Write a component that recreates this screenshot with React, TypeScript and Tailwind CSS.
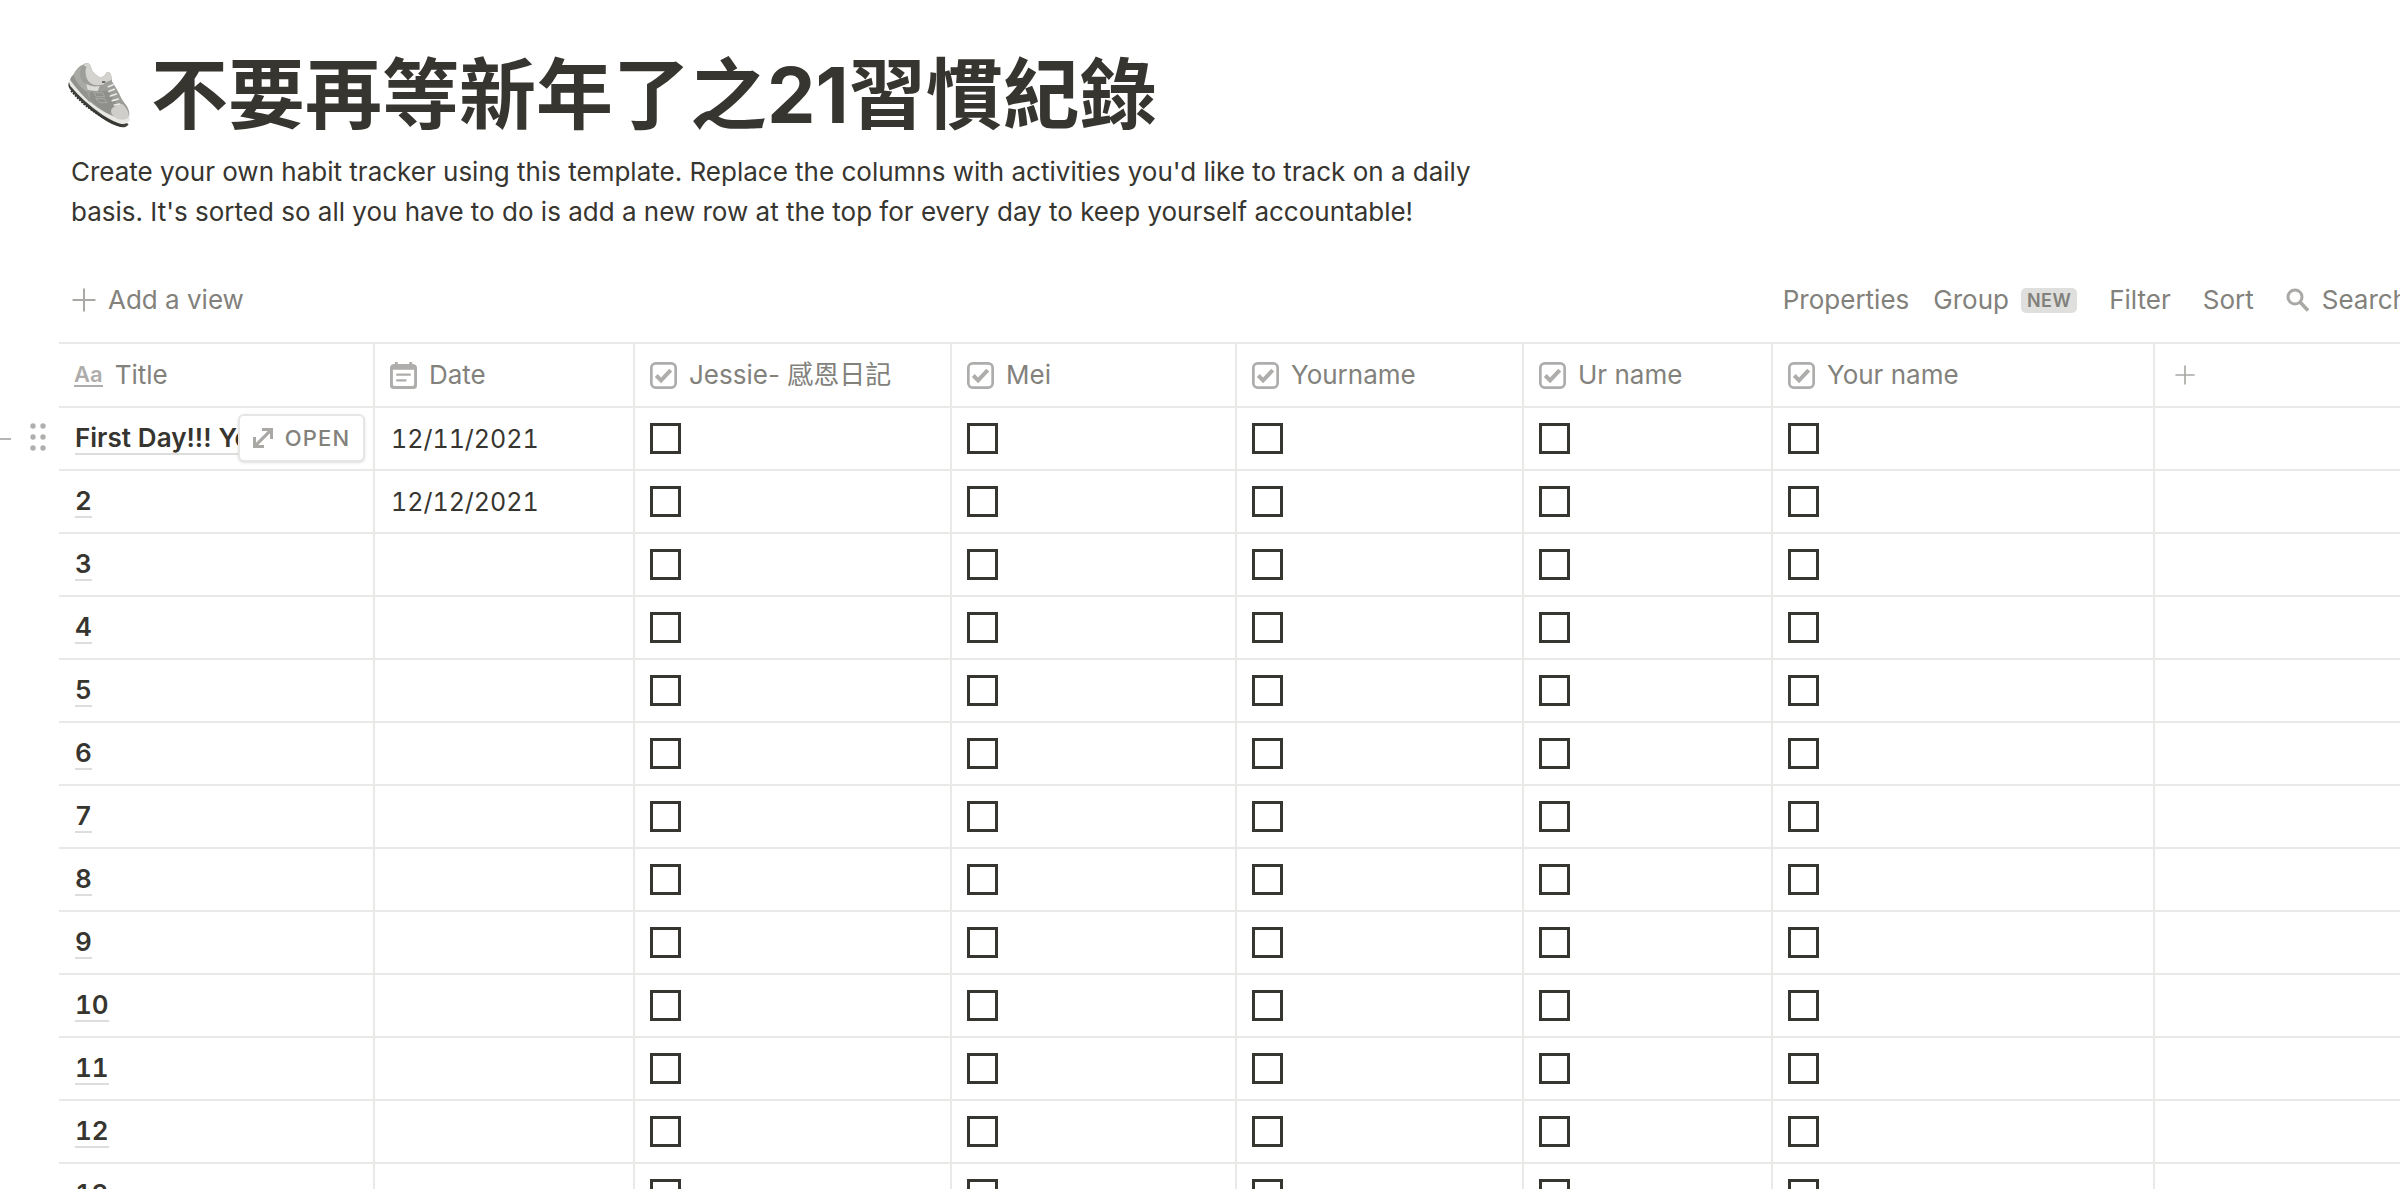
import { type FC, type ReactNode } from "react";

type Property = {
  name: string;
  width: string;
};

const properties: Property[] = [
  { name: "Jessie- 感恩日記", width: "w-[317px]" },
  { name: "Mei", width: "w-[285px]" },
  { name: "Yourname", width: "w-[287px]" },
  { name: "Ur name", width: "w-[249px]" },
  { name: "Your name", width: "w-[382px]" },
];

const rows = [
  { title: "First Day!!! You", date: "12/11/2021", hovered: true },
  { title: "2", date: "12/12/2021" },
  { title: "3" },
  { title: "4" },
  { title: "5" },
  { title: "6" },
  { title: "7" },
  { title: "8" },
  { title: "9" },
  { title: "10" },
  { title: "11" },
  { title: "12" },
  { title: "13" },
];

const ShoeIcon = () => (
  <svg className="h-[68px] w-16 shrink-0" viewBox="18 15 192 204" fill="none" aria-hidden="true">
    {/* outsole */}
    <path d="M24 78q-5 12 3 22 38 46 92 84 34 25 64 30 14 1 20-10l-20-8L60 106Z" fill="#3f3f3c" />
    <path d="M30 104q60 72 152 107" stroke="#2f2f2c" strokeWidth="5" strokeDasharray="6 3" />
    {/* midsole */}
    <path d="M26 72q-4 10 2 18 42 50 96 86 34 22 58 28 16 2 25-12l-4-14-30 4Z" fill="#e9e8e4" />
    {/* upper */}
    <path
      d="M27 72q2-10 12-18 8-20 26-28 8-5 17-4 7 3 8 12 2 12 12 20l14 10q10 0 15-6l7-10q10 0 12 8l4 22q12 18 20 34 6 16 16 28 16 18 15 38-10 16-40 6Q92 158 27 72Z"
      fill="#9d9d99"
    />
    <path
      d="M66 27q8-5 16-5 7 3 8 12 2 12 12 20l14 10q10 0 15-6l7-10q10 0 12 8l2 16q-16 4-26 14l-20 2q-22-4-28-20-8-20-2-36Z"
      fill="#d4d3cf"
    />
    <path d="M66 30q-12 10-8 34 6 18 24 24l-4 20Q46 94 34 62q8-22 32-32Z" fill="#a9a9a5" />
    <path d="M28 70q3-8 10-14 6 28 40 52l10 32Q54 110 28 70Z" fill="#92928e" />
    <path d="M76 84q16 10 40 6l-6 16-30-4Z" fill="#dddcd8" />
    <path d="M88 108l54-4 26 44-24 26q-30-16-58-44Z" fill="#8f8f8b" />
    <path d="M98 110h26l8 12h-26Zm6 18h26l8 12h-22Z" stroke="#aaa9a5" strokeWidth="3" />
    {/* toe */}
    <path d="M150 162q10-16 34-18 20 18 20 38-10 14-36 6-18-10-18-26Z" fill="#cfcecb" />
    {/* laces */}
    <path
      d="m142 92 14-6m-12 20 16-6m-12 20 18-6m-12 20 18-5m-12 18 16-3"
      stroke="#ecebe9"
      strokeWidth="5"
      strokeLinecap="round"
    />
    <path d="M123 78h10" stroke="#5b5b58" strokeWidth="5" />
  </svg>
);

const PlusIcon = ({ className }: { className: string }) => (
  <svg className={className} viewBox="0 0 24 24" aria-hidden="true">
    <path d="M12 0.5v23M0.5 12h23" stroke="#a9a8a5" strokeWidth="2" />
  </svg>
);

const DateIcon = () => (
  <svg className="size-[27px] shrink-0" viewBox="0 0 28 28" aria-hidden="true">
    <path
      fillRule="evenodd"
      d="M5 0h3v2h12V0h3v2q5 0 5 4v18q0 4-4 4H4q-4 0-4-4V6q0-4 5-4ZM3 8v15q0 2 2 2h18q2 0 2-2V8Z"
      fill="#aeadab"
    />
    <path d="M6.500 13h15M6.500 19h10.500" stroke="#aeadab" strokeWidth="2.400" />
  </svg>
);

const CheckboxIcon = () => (
  <svg className="size-[27px] shrink-0" viewBox="0 0 28 28" fill="none" aria-hidden="true">
    <rect x="1.400" y="1.400" width="25.200" height="25.200" rx="4.500" stroke="#aeadab" strokeWidth="2.800" />
    <path d="m6.500 14 5 5 10-10.500" stroke="#aeadab" strokeWidth="4.200" />
  </svg>
);

const SearchIcon = () => (
  <svg className="h-6 w-6 shrink-0" viewBox="0 0 24 24" fill="none" aria-hidden="true">
    <circle cx="9" cy="9" r="7" stroke="#a9a8a5" strokeWidth="3" />
    <path d="m14 14 8 8.500" stroke="#a9a8a5" strokeWidth="3.500" />
  </svg>
);

const OpenIcon = () => (
  <svg className="h-5 w-5" viewBox="0 0 20 20" aria-hidden="true">
    <path d="M9 0h11v11h-3V5.200L5.200 17H11v3H0V9h3v5.800L14.800 3H9Z" fill="#a9a8a5" />
  </svg>
);

const RowHandle = () => (
  <>
    <button className="absolute top-7 -left-[59px] h-[5px] w-[11px]" aria-label="Add row">
      <span className="block h-[2px] bg-[#b5b4b2]" />
    </button>
    <button className="absolute top-[15px] -left-[29px]" aria-label="Drag row">
      <svg className="h-7 w-4" viewBox="0 0 16 28" fill="#b0afad" aria-hidden="true">
        <circle cx="3" cy="3" r="2.700" />
        <circle cx="13" cy="3" r="2.700" />
        <circle cx="3" cy="14" r="2.700" />
        <circle cx="13" cy="14" r="2.700" />
        <circle cx="3" cy="25" r="2.700" />
        <circle cx="13" cy="25" r="2.700" />
      </svg>
    </button>
  </>
);

const HeaderCell: FC<{ icon: ReactNode; children: ReactNode }> = ({ icon, children }) => (
  <th scope="col" className="h-16 border-r-2 border-b-2 border-[#e9e9e8] p-0 font-normal">
    <div className="flex items-center gap-3 px-[15px] whitespace-nowrap">
      {icon}
      {children}
    </div>
  </th>
);

export default function App() {
  return (
    <main className="overflow-hidden bg-white pt-[46px] pl-[59px] font-[Inter,'Noto_Sans_CJK_TC',sans-serif] text-[26px] leading-10 text-[#37352f]">
      <header className="px-3">
        <h1 className="-ml-1 flex items-center gap-5 text-[77px] leading-[98px] font-bold whitespace-nowrap">
          <ShoeIcon />
          不要再等新年了之21習慣紀錄
        </h1>
        <p className="mt-2 max-w-[1430px]">
          Create your own habit tracker using this template. Replace the columns with activities
          you'd like to track on a daily basis. It's sorted so all you have to do is add a new row
          at the top for every day to keep yourself accountable!
        </p>
      </header>

      <div className="mt-12 flex justify-between pb-[22px] whitespace-nowrap text-[#82817c]">
        <button className="flex items-center gap-3 px-[13px]">
          <PlusIcon className="h-6 w-6" />
          Add a view
        </button>
        <div className="-mr-2 flex items-center gap-8">
          <button className="-mr-2">Properties</button>
          <button className="flex items-center gap-3">
            Group
            <span className="rounded-[5px] bg-[#dfdfdd] px-[6px] text-[18px] leading-[25px] font-semibold tracking-wide">
              NEW
            </span>
          </button>
          <button>Filter</button>
          <button>Sort</button>
          <button className="flex items-center gap-3">
            <SearchIcon />
            Search
          </button>
        </div>
      </div>

      <table className="w-full table-fixed border-separate border-spacing-0 border-t-2 border-[#e9e9e8] text-left">
        <colgroup>
          <col className="w-[316px]" />
          <col className="w-[260px]" />
          {properties.map((property) => (
            <col key={property.name} className={property.width} />
          ))}
          <col />
        </colgroup>
        <thead className="text-[#82817c]">
          <tr>
            <HeaderCell
              icon={
                <span className="border-b-2 border-[#aeadab] text-[22px] leading-[22px] font-semibold text-[#aeadab]">
                  Aa
                </span>
              }
            >
              Title
            </HeaderCell>
            <HeaderCell icon={<DateIcon />}>Date</HeaderCell>
            {properties.map((property) => (
              <HeaderCell key={property.name} icon={<CheckboxIcon />}>
                {property.name}
              </HeaderCell>
            ))}
            <th className="border-b-2 border-[#e9e9e8] p-0">
              <button className="flex px-5" aria-label="Add a property">
                <PlusIcon className="h-5 w-5" />
              </button>
            </th>
          </tr>
        </thead>
        <tbody className="tabular-nums">
          {rows.map((row) => (
            <tr key={row.title}>
              <td className="relative h-[63px] border-r-2 border-b-2 border-[#e9e9e8] p-0">
                {row.hovered && <RowHandle />}
                <div className="px-4 leading-[30px] font-semibold whitespace-nowrap">
                  <span className="inline-block border-b-2 border-[#dddddb]">{row.title}</span>
                </div>
                {row.hovered && (
                  <button className="absolute top-1.5 right-2 flex h-12 w-[127px] items-center justify-center gap-3 rounded-md border-2 border-[#e6e6e5] bg-white text-[22px] font-medium tracking-wider text-[#82817c] shadow-sm">
                    <OpenIcon />
                    OPEN
                  </button>
                )}
              </td>
              <td className="border-r-2 border-b-2 border-[#e9e9e8] px-4 py-0 text-[25px]">{row.date}</td>
              {properties.map((property) => (
                <td key={property.name} className="border-r-2 border-b-2 border-[#e9e9e8] px-[15px] py-0">
                  <input
                    type="checkbox"
                    className="block size-[31px] appearance-none border-3 border-[#37352f] checked:bg-[#37352f]"
                    aria-label={`${property.name}, ${row.title}`}
                  />
                </td>
              ))}
              <td className="border-b-2 border-[#e9e9e8] p-0" />
            </tr>
          ))}
        </tbody>
      </table>
    </main>
  );
}
